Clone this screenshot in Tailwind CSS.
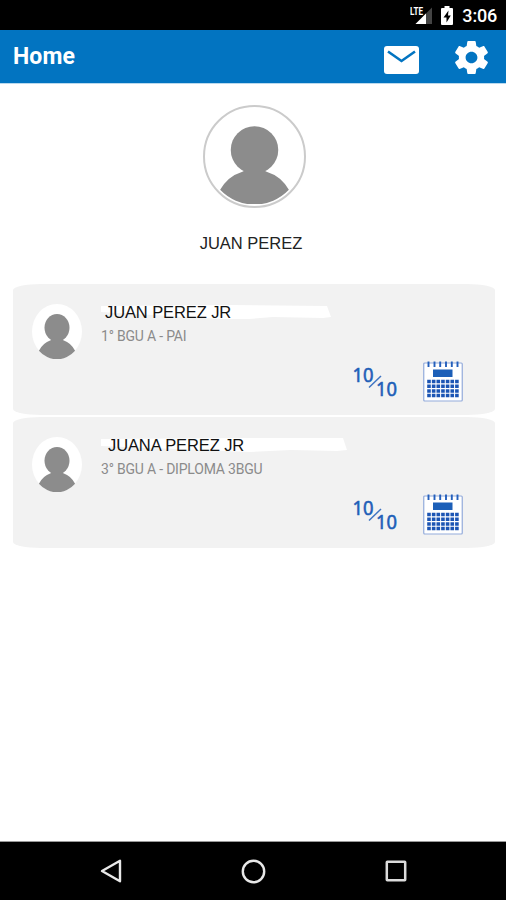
<!DOCTYPE html>
<html lang="en">
<head>
  <meta charset="UTF-8" />
  <meta name="viewport" content="width=device-width, initial-scale=1.0" />
  <title>Home</title>
  <script src="https://cdn.jsdelivr.net/npm/@tailwindcss/browser@4"></script>
</head>
<body class="w-[506px] h-[900px] flex flex-col bg-white overflow-hidden font-['Roboto',sans-serif]">

  <!-- Shared icons -->
  <svg class="hidden">
    <symbol id="avatar" viewBox="0 0 94 94" preserveAspectRatio="none">
      <circle cx="47" cy="47" r="47" fill="#fff" />
      <g fill="#8c8c8c">
        <circle cx="47" cy="40.500" r="23.500" />
        <path d="M13 80A38 38 0 0 1 35 62Q38 61 35 58H59Q56 61 59 62A38 38 0 0 1 81 80A47 47 0 0 1 13 80z" />
      </g>
    </symbol>
    <symbol id="grades" viewBox="0 0 46 34">
      <g fill="#1f5fb8" stroke="#1f5fb8" stroke-width=".6" font-family="Noto Sans" font-size="19.5">
        <text x=".5" y="16.500" textLength="21" lengthAdjust="spacingAndGlyphs">10</text>
        <text x="24" y="30.500" textLength="21" lengthAdjust="spacingAndGlyphs">10</text>
      </g>
      <path d="M17 22.500L29 11" stroke="#3f74c2" stroke-width="1.500" />
    </symbol>
    <symbol id="calendar" viewBox="0 0 40 41">
      <rect x=".75" y="2" width="38.500" height="38" rx="1" fill="#fff" stroke="#93abdb" stroke-width="1.200" />
      <path d="M5.500 .5v5.500M11.500 .5v5.500M17.200 .5v5.500M23 .5v5.500M28.800 .5v5.500M34.500 .5v5.500" stroke="#2560bc" stroke-width="1.900" />
      <rect x="10" y="8.500" width="19.500" height="7.500" fill="#1c5fb8" />
      <g stroke="#1c55b4" stroke-width="3.500" stroke-dasharray="3.600 1.050">
        <path d="M4.200 20.500H35.700M4.200 25.200H35.700M4.200 29.900H35.700M4.200 34.600H35.700" />
      </g>
    </symbol>
  </svg>

  <!-- Status bar -->
  <div class="h-[30px] shrink-0 bg-black flex items-center justify-end pr-[9px] text-white">
    <svg class="w-[23px] h-[20px] mr-[8px]" viewBox="0 0 23 20">
      <path d="M22 2.500V19H5.500z" fill="#444" />
      <path d="M16 8.500V19H5.500z" fill="#fff" />
      <path d="M0 0H13V10.500H0z" fill="#000" />
      <text x="0" y="9.500" fill="#fff" font-family="Roboto" font-weight="700" font-size="10.500" textLength="13" lengthAdjust="spacingAndGlyphs">LTE</text>
    </svg>
    <svg class="w-[12px] h-[19px] mr-[9px]" viewBox="0 0 12 19">
      <path d="M3.500 0h5v2H11q1 0 1 1v15q0 1-1 1H1q-1 0-1-1V3q0-1 1-1h2.500z" fill="#fff" />
      <path d="M7.500 4.500L2.500 11.500H5.500V16.500L9.800 9.500H7z" fill="#000" />
    </svg>
    <span class="text-[18px] leading-none font-medium tracking-[-0.2px] mt-[2px]">3:06</span>
  </div>

  <!-- App bar -->
  <header class="h-[53px] shrink-0 bg-[#0274c1] flex items-center pl-[13px] pr-[18px] text-white">
    <h1 class="text-[23px] leading-none font-bold tracking-[0.1px]">Home</h1>
    <svg class="ml-auto w-[35px] h-[28px] mt-[7px]" viewBox="0 0 35 28">
      <rect width="35" height="28" rx="3" fill="#fff" />
      <path d="M4 5.500L17.500 15L31 5.500" fill="none" stroke="#0274c1" stroke-width="2.600" />
    </svg>
    <svg class="ml-[36px] mt-px w-[33px] h-[33px]" viewBox="2.200 2 19.600 20" preserveAspectRatio="none">
      <path fill="#fff" d="M19.430 12.980c.04-.32.07-.64.07-.98s-.03-.66-.07-.98l2.110-1.650c.19-.15.24-.42.12-.64l-2-3.460c-.12-.22-.39-.3-.61-.22l-2.490 1c-.52-.4-1.080-.73-1.690-.98l-.38-2.650C14.460 2.180 14.250 2 14 2h-4c-.25 0-.46.18-.49.42l-.38 2.650c-.61.25-1.170.59-1.690.98l-2.490-1c-.23-.09-.49 0-.61.22l-2 3.460c-.13.22-.07.49.12.64l2.110 1.650c-.04.32-.07.65-.07.98s.03.66.07.98l-2.110 1.650c-.19.15-.24.42-.12.64l2 3.460c.12.22.39.3.61.22l2.490-1c.52.4 1.080.73 1.690.98l.38 2.650c.03.24.24.42.49.42h4c.25 0 .46-.18.49-.42l.38-2.650c.61-.25 1.170-.59 1.690-.98l2.490 1c.23.09.49 0 .61-.22l2-3.460c.12-.22.07-.49-.12-.64l-2.110-1.650zM12 15.500c-1.930 0-3.500-1.570-3.500-3.500s1.570-3.500 3.500-3.500 3.500 1.570 3.500 3.500-1.570 3.500-3.500 3.500z" />
    </svg>
  </header>

  <main class="flex-1 border-t border-[#b9d9ee]">
    <!-- Profile -->
    <section class="flex flex-col items-center pt-[21px] pl-[2px]">
      <div class="size-[103px] rounded-full border-2 border-[#cbcbcb] flex items-center justify-center">
        <svg class="size-[95px]"><use href="#avatar" /></svg>
      </div>
      <p class="mt-[25px] mr-[6px] h-[20px] text-[16.500px] leading-[20px] text-[#222] font-['Liberation_Sans',sans-serif] whitespace-nowrap">JUAN PEREZ</p>
    </section>

    <!-- Students -->
    <section class="mt-[31px] ml-[13px] w-[482px] flex flex-col gap-[2px]">
      <article class="h-[131px] bg-[#f2f2f2] rounded-[28px/6px] flex flex-col justify-between pt-[20px] pb-[13px]">
        <div class="flex pl-[19px]">
          <svg class="w-[50px] h-[55px]"><use href="#avatar" /></svg>
          <div class="ml-[19px]">
            <div class="relative h-[17px] w-[230px]">
              <svg class="absolute inset-0 w-[230px] h-[17px]" viewBox="0 0 230 17"><path d="M0 2L130 1L226 2L230 13L222 14L172 13L148 15L120 15L0 8z" fill="#fff" /></svg>
              <h2 class="relative pl-[4px] text-[16.500px] leading-[17px] tracking-[-0.1px] text-[#111] font-['Liberation_Sans',sans-serif] whitespace-nowrap">JUAN PEREZ JR</h2>
            </div>
            <p class="mt-[6px] text-[14px] leading-[18px] tracking-[-0.2px] text-[#8b8b8b] whitespace-nowrap">1° BGU A - PAI</p>
          </div>
        </div>
        <div class="-mt-[3px] flex items-center justify-end gap-[25px] pr-[32px]">
          <svg class="w-[46px] h-[34px]"><use href="#grades" /></svg>
          <svg class="w-[40px] h-[41px]"><use href="#calendar" /></svg>
        </div>
      </article>

      <article class="h-[131px] bg-[#f2f2f2] rounded-[28px/6px] flex flex-col justify-between pt-[20px] pb-[13px]">
        <div class="flex pl-[19px]">
          <svg class="w-[50px] h-[55px]"><use href="#avatar" /></svg>
          <div class="ml-[19px]">
            <div class="relative h-[17px] w-[246px]">
              <svg class="absolute inset-0 w-[246px] h-[17px]" viewBox="0 0 246 17"><path d="M0 2L140 1L242 1L246 13L236 14L190 13L150 15L0 9z" fill="#fff" /></svg>
              <h2 class="relative pl-[7px] text-[16.500px] leading-[17px] tracking-[-0.1px] text-[#111] font-['Liberation_Sans',sans-serif] whitespace-nowrap">JUANA PEREZ JR</h2>
            </div>
            <p class="mt-[6px] text-[14px] leading-[18px] tracking-[-0.2px] text-[#8b8b8b] whitespace-nowrap">3° BGU A - DIPLOMA 3BGU</p>
          </div>
        </div>
        <div class="-mt-[3px] flex items-center justify-end gap-[25px] pr-[32px]">
          <svg class="w-[46px] h-[34px]"><use href="#grades" /></svg>
          <svg class="w-[40px] h-[41px]"><use href="#calendar" /></svg>
        </div>
      </article>
    </section>
  </main>

  <!-- Navigation bar -->
  <nav class="h-[59px] shrink-0 border-t border-[#999] bg-black flex items-center pl-[100px]">
    <svg class="w-[22px] h-[24px]" viewBox="0 0 22 24"><path d="M2 12L20 1.800V22.200z" fill="none" stroke="#e8e8e8" stroke-width="2.400" stroke-linejoin="round" /></svg>
    <svg class="ml-[119px] size-[25px]" viewBox="0 0 25 25"><circle cx="12.500" cy="12.500" r="10.700" fill="none" stroke="#e8e8e8" stroke-width="2.400" /></svg>
    <svg class="ml-[119px] size-[22px]" viewBox="0 0 22 22"><rect x="1.800" y="1.800" width="18.400" height="18.400" rx=".5" fill="none" stroke="#dcdcdc" stroke-width="2.500" /></svg>
  </nav>

</body>
</html>
